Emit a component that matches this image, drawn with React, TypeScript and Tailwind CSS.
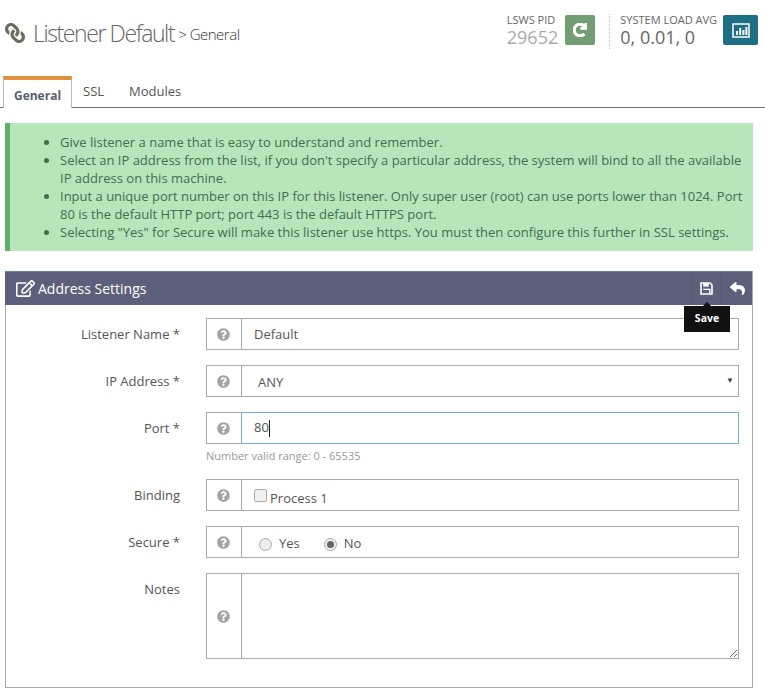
import type { ReactNode } from "react";
import { FaLink, FaQuestionCircle, FaRedo, FaRegEdit, FaReply } from "react-icons/fa";

function Row({ label, children, hint, tall, focus }: {
  label: string;
  children: ReactNode;
  hint?: string;
  tall?: boolean;
  focus?: boolean;
}) {
  return (
    <div className="flex items-start">
      <div className="w-[174px] shrink-0 pt-[6px] text-right text-[13px] leading-[20px] text-[#555]">{label}</div>
      <div className="ml-[26px] w-[533px]">
        <div className={`flex border border-[#a9a9a9] ${tall ? "h-[86px]" : "h-[32px]"}`}>
          <div className="flex w-[35px] shrink-0 items-center justify-center border-r border-[#a9a9a9]">
            <FaQuestionCircle className="-ml-[1px] text-[13px] text-[#a3a3a8]" />
          </div>
          <div className={`relative flex min-w-0 flex-1 items-center text-[13px] text-[#555] ${focus ? "outline outline-1 outline-[#6fb3d2]" : ""}`}>
            {children}
          </div>
        </div>
        {hint && <div className="mt-[4px] text-[11px] leading-[16px] text-[#999]">{hint}</div>}
      </div>
    </div>
  );
}

function Radio({ label, checked }: { label: string; checked?: boolean }) {
  return (
    <span className="flex items-center gap-[7px]">
      <span className="flex h-[13px] w-[13px] items-center justify-center rounded-full border border-[#a9a9a9] bg-[#eee]">
        {checked && <span className="h-[7px] w-[7px] rounded-full bg-[#666]" />}
      </span>
      {label}
    </span>
  );
}

export default function App() {
  return (
    <div className="h-[694px] w-[765px] overflow-hidden bg-white font-['Open_Sans',sans-serif] text-[#555]">
      <header className="flex h-[76px] items-start">
        <div className="ml-[5px] mt-[17px] flex items-center">
          <FaLink className="text-[20px] text-[#6b6b5e] [transform:scaleX(-1)]" />
          <h1 className="ml-[8px] text-[23px] font-light leading-[32px] tracking-[-1.4px] text-[#666]">Listener Default</h1>
          <span className="ml-[4px] mt-[2px] text-[15px] font-light tracking-[-0.5px] text-[#333]">&gt; General</span>
        </div>
        <div className="ml-auto mr-[7px] mt-[14px] flex">
          <div>
            <div className="text-[11px] leading-[12px] text-[#666]">LSWS PID</div>
            <div className="text-[18px] leading-[23px] text-[#aaa]">29652</div>
          </div>
          <div className="ml-[7px] mt-px flex h-[30px] w-[30px] items-center justify-center rounded-[2px] bg-[#739e73]">
            <FaRedo className="text-[14px] text-white" stroke="currentColor" strokeWidth={40} />
          </div>
          <div className="ml-[14px] border-l border-dotted border-[#bbb] pl-[10px]">
            <div className="text-[11px] leading-[12px] text-[#666]">SYSTEM LOAD AVG</div>
            <div className="text-[18px] leading-[23px] text-[#666]">0, 0.01, 0</div>
          </div>
          <div className="ml-[6px] mt-px flex h-[30px] w-[35px] items-center justify-center rounded-[2px] bg-[#1e6e84]">
            <svg width="18" height="15" viewBox="0 0 18 15" fill="none">
              <rect x="1" y="1" width="16" height="13" stroke="#fff" strokeWidth="1.5" />
              <path d="M4 12V8h2v4zM7.2 12V5h2v7zM10.4 12V7h2v5zM13.4 12V4h2v8z" fill="#fff" />
            </svg>
          </div>
        </div>
      </header>

      <nav className="flex h-[32px] border-b border-[#777]">
        <div className="ml-[3px] flex h-[32px] w-[69px] items-center justify-center border-x border-[#bbb] border-t-[4px] border-t-[#e28f3e] bg-white pt-[3px] text-[12px] font-bold text-[#5a5f6e]">
          General
        </div>
        <div className="ml-[11px] pt-[5px] text-[13px] leading-[20px] text-[#555]">SSL</div>
        <div className="ml-[25px] pt-[5px] text-[13px] leading-[20px] text-[#555]">Modules</div>
      </nav>

      <div className="ml-[5px] mt-[15px] h-[128px] w-[748px] border-l-[5px] border-[#5cb263] bg-[#b8e6bb] pl-[50px] pr-[8px] pt-[10px] text-[13px] leading-[18px] text-[#3f6f50]">
        <ul className="list-disc">
          <li>Give listener a name that is easy to understand and remember.</li>
          <li>Select an IP address from the list, if you don't specify a particular address, the system will bind to all the available IP address on this machine.</li>
          <li>Input a unique port number on this IP for this listener. Only super user (root) can use ports lower than 1024. Port 80 is the default HTTP port; port 443 is the default HTTPS port.</li>
          <li>Selecting "Yes" for Secure will make this listener use https. You must then configure this further in SSL settings.</li>
        </ul>
      </div>

      <section className="ml-[5px] mt-[20px] w-[748px] border-b border-r border-[#a9a9a9]">
        <div className="flex h-[34px] items-center border-t border-[#6a868c] bg-[#5d607a] text-white">
          <FaRegEdit className="ml-[11px] text-[19px]" />
          <span className="ml-[3px] text-[14px]">Address Settings</span>
          <div className="relative ml-auto flex h-full w-[31px] items-center justify-center border-x border-[#54576f]">
            <svg width="13" height="13" viewBox="0 0 13 13" fill="none">
              <path d="M1 1h9l2 2v9H1z" stroke="#fff" strokeWidth="1.6" />
              <path d="M3.2 1v3.6h5.6V1z" fill="#fff" />
              <path d="M3.2 7.4h6.6V12" stroke="#fff" strokeWidth="1.4" />
            </svg>
            <div className="absolute left-[-8px] top-[34px] z-10 flex h-[26px] w-[46px] items-center justify-center bg-[#111] text-[10.5px] font-bold text-white">
              <span className="absolute -top-[4px] left-1/2 h-0 w-0 -translate-x-1/2 border-x-[4px] border-b-[4px] border-x-transparent border-b-[#111]" />
              Save
            </div>
          </div>
          <div className="flex h-full w-[30px] items-center justify-center">
            <FaReply className="text-[15px]" />
          </div>
        </div>

        <div className="flex h-[382px] flex-col border-l border-[#a9a9a9] pt-[13px]">
          <div className="flex flex-col gap-[15px]">
            <Row label="Listener Name *"><span className="pl-[12px] pt-[1px]">Default</span></Row>
            <Row label="IP Address *">
              <span className="pl-[16px] pt-[3px]">ANY</span>
              <span className="absolute right-[4px] top-[8px] text-[8px] text-[#444]">▼</span>
            </Row>
            <Row label="Port *" hint="Number valid range: 0 - 65535" focus>
              <span className="pl-[12px]">80</span>
              <span className="h-[17px] w-px bg-[#222]" />
            </Row>
            <Row label="Binding">
              <span className="ml-[12px] h-[13px] w-[13px] rounded-[2px] border border-[#a9a9a9] bg-[#f0f0f0]" />
              <span className="ml-[3px] mt-[7px]">Process 1</span>
            </Row>
            <Row label="Secure *">
              <span className="ml-[17px] mt-[4px] flex gap-[24px]">
                <Radio label="Yes" />
                <Radio label="No" checked />
              </span>
            </Row>
            <Row label="Notes" tall>
              <textarea className="block h-full w-full resize-y bg-white outline-none" />
            </Row>
          </div>
        </div>
      </section>
    </div>
  );
}
